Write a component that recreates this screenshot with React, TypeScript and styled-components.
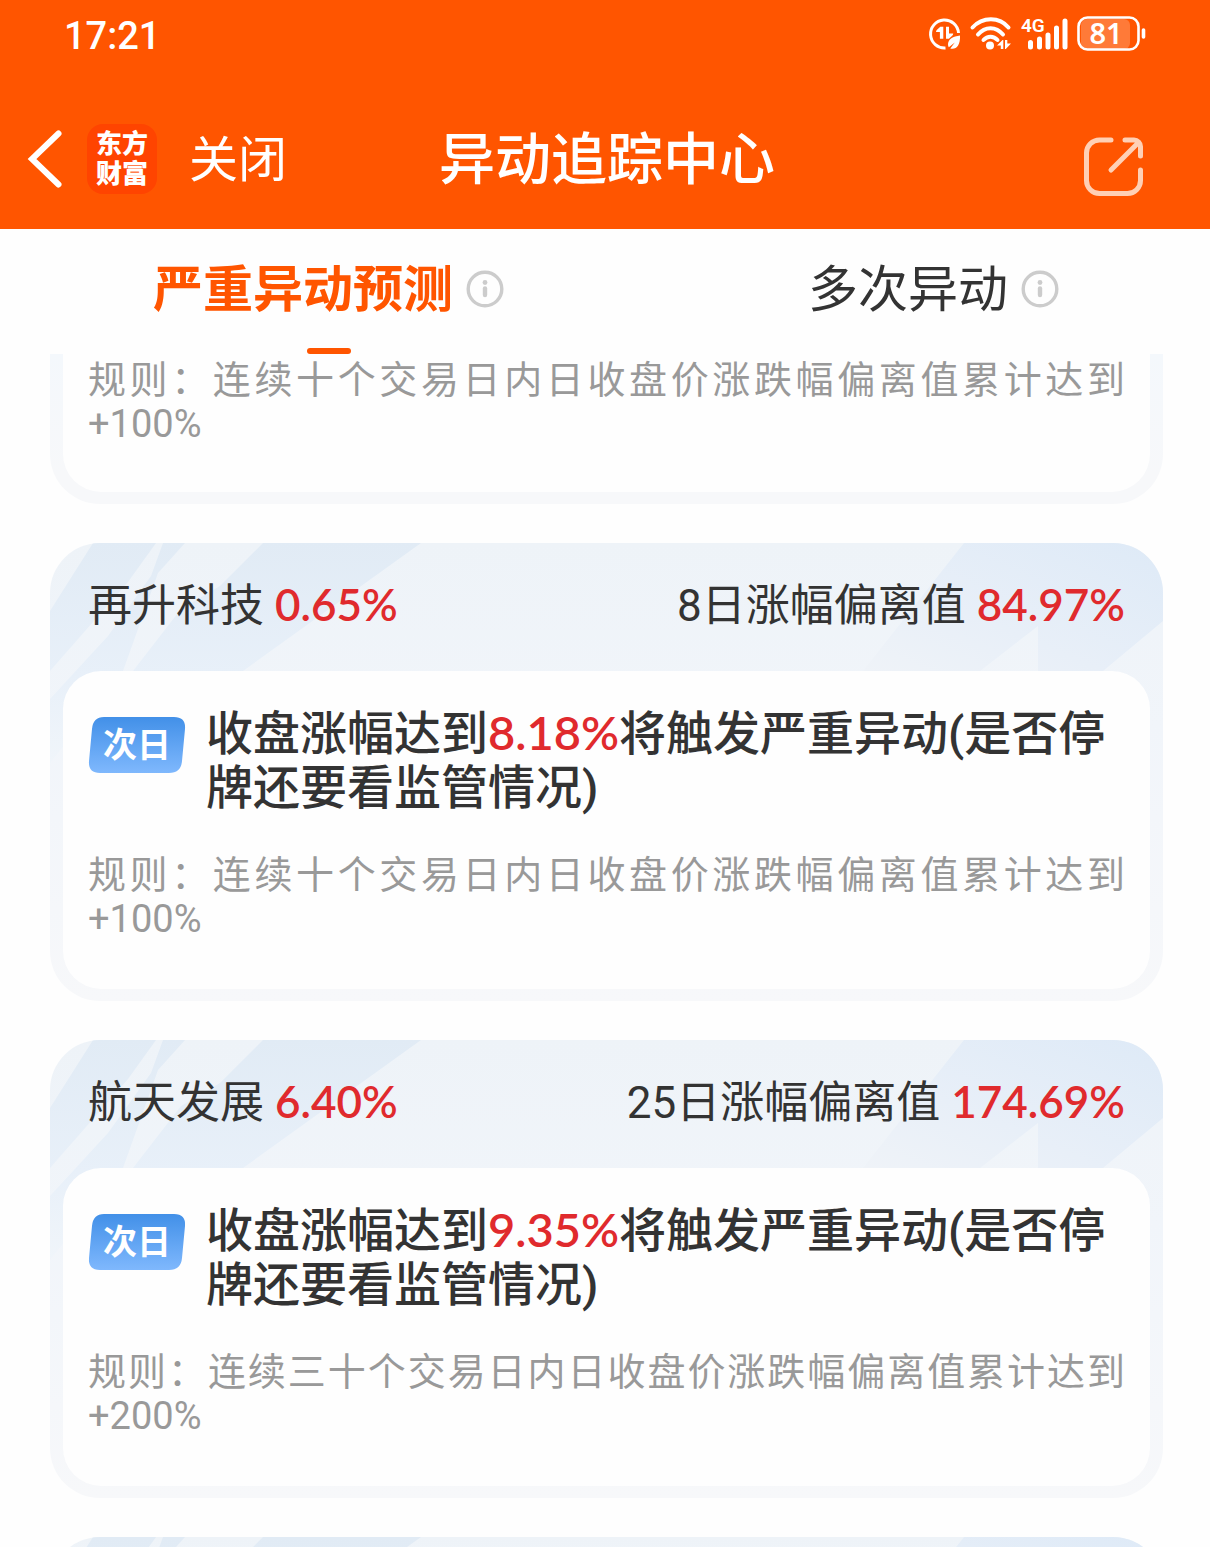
import React from "react";
import styled, { createGlobalStyle } from "styled-components";

const text = `Roboto, "Noto Sans CJK SC", sans-serif`;
const figures = `Lato, "Noto Sans CJK SC", sans-serif`;

const GlobalStyle = createGlobalStyle`
  *, *::before, *::after { box-sizing: border-box; }
  body { margin: 0; background: #fefefe; color: #333; font-family: ${text}; }
  button { border: 0; padding: 0; margin: 0; background: none; color: inherit; font: inherit; cursor: pointer; }
  h1, h2, p { margin: 0; font: inherit; }
  svg { display: block; flex: none; overflow: visible; }
`;

const Shell = styled.div`
  display: flex;
  flex-direction: column;
  height: 100vh;
  overflow: hidden;
`;

const TopBar = styled.header`
  flex: none;
  background: #ff5500;
  color: #fff;
`;

const StatusBar = styled.div`
  display: flex;
  align-items: center;
  justify-content: space-between;
  height: 68px;
  padding: 0 64px;
`;

const Clock = styled.time`
  padding-top: 4px;
  font-size: 38px;
  font-weight: 500;
  line-height: 48px;
`;

const StatusIcons = styled.div`
  display: flex;
  align-items: center;
  gap: 9px;
`;

const NavBar = styled.nav`
  display: grid;
  grid-template-columns: 1fr auto 1fr;
  align-items: center;
  height: 161px;
  padding: 20px 20px 0 24px;
`;

const NavStart = styled.div`
  display: flex;
  align-items: center;
`;

const AppBadge = styled.div`
  display: flex;
  flex-direction: column;
  align-items: center;
  justify-content: center;
  width: 70px;
  height: 70px;
  margin: 0 32px 0 22px;
  border-radius: 16px;
  background: #ff4400;
  font-size: 26px;
  font-weight: 900;
  line-height: 30px;
`;

const CloseButton = styled.button`
  && { padding-top: 4px; font-size: 49px; line-height: 70px; }
`;

const PageTitle = styled.h1`
  && { padding-top: 2px; font-size: 56px; font-weight: 500; line-height: 80px; }
`;

const ShareButton = styled.button`
  && { justify-self: end; margin: 16px 45px 0 0; }
`;

const Tabs = styled.div`
  display: grid;
  grid-template-columns: 1fr 1fr;
  flex: none;
  height: 125px;
`;

const TabItem = styled.div`
  display: flex;
  flex-direction: column;
  align-items: center;
  justify-content: space-between;
  padding: 20px 0 0 52px;
`;

const TabRow = styled.div`
  display: flex;
  align-items: center;
  gap: 13px;
`;

const TabButton = styled.button<{ $active?: boolean }>`
  && {
    padding-top: 2px;
    color: ${(p) => (p.$active ? "#ff5500" : "#333")};
    font-size: 50px;
    font-weight: ${(p) => (p.$active ? 700 : 400)};
    line-height: 78px;
  }
`;

const Underline = styled.span`
  width: 44px;
  height: 6px;
  border-radius: 3px;
  background: #ff5500;
`;

const List = styled.main`
  flex: 1;
  min-height: 0;
  display: flex;
  flex-direction: column;
  gap: 39px;
  padding: 0 47px 0 50px;
  overflow: hidden;
`;

const Card = styled.article<{ $continued?: boolean }>`
  position: relative;
  flex: none;
  padding: 0 13px 12px;
  border-radius: ${(p) => (p.$continued ? "0 0 50px 50px" : "50px")};
  background: ${(p) => (p.$continued ? "linear-gradient(#f4f8fc, #f7f8fa 80%)" : "linear-gradient(#eef3f8, #f1f5fa 40%, #f7f8fa)")};
  overflow: hidden;
`;

const CardHead = styled.header`
  position: relative;
  display: flex;
  justify-content: space-between;
  height: 128px;
  padding: 28px 25px 0;
  font-size: 44px;
  line-height: 66px;
`;

const Figure = styled.span`
  margin-left: 11px;
  color: #e02a2d;
  font-family: ${figures};
  font-weight: 600;
`;

const CardBody = styled.div<{ $continued?: boolean }>`
  position: relative;
  padding: ${(p) => (p.$continued ? "4px 25px 46px" : "36px 25px 48px")};
  border-radius: ${(p) => (p.$continued ? "0 0 38px 38px" : "38px")};
  background: #fefefe;
`;

const Forecast = styled.div`
  display: flex;
  gap: 20px;
  margin-bottom: 38px;
`;

const DayTag = styled.span`
  display: grid;
  place-items: center;
  position: relative;
  flex: none;
  width: 98px;
  height: 56px;
  margin-top: 10px;
  color: #fff;
  font-size: 34px;
  font-weight: 700;
  line-height: 56px;
`;

const TagShape = styled.svg`
  position: absolute;
  inset: 0;
`;

const TagText = styled.span`
  position: relative;
`;

const ForecastText = styled.h2`
  && { font-size: 47px; font-weight: 500; line-height: 54px; }
`;

const Trigger = styled.em`
  color: #e02a2d;
  font-family: ${figures};
  font-style: normal;
  font-weight: 600;
  line-height: 1;
`;

const Rule = styled.p`
  && {
    color: #999;
    font-size: 38px;
    line-height: 44px;
    text-align: justify;
  }
`;

const Rays = styled.svg<{ $side: "left" | "right" }>`
  position: absolute;
  top: 0;
  ${(p) => p.$side}: 0;
`;

const InfoIcon = () => (
  <svg width="38" height="38" viewBox="0 0 38 38" aria-hidden="true">
    <circle cx="19" cy="19" r="16.8" fill="none" stroke="#ccc" strokeWidth="3.4" />
    <circle cx="19" cy="12.5" r="2.4" fill="#ccc" />
    <path d="M19 18.5v6.5" stroke="#ccc" strokeWidth="4.4" strokeLinecap="round" />
  </svg>
);

const DataSaverIcon = () => (
  <svg width="32" height="34" viewBox="0 0 32 34" fill="#fff" aria-hidden="true">
    <path d="M16.5 31A14 14 0 1 1 29.5 16" fill="none" stroke="#fff" strokeWidth="3" />
    <path d="M14.3 9.7v12h-3.4v-6.700H7q0-1.500 1-2.300l3.300-3zM17 9.700h3v6.700h4.200q0 1.500-1 2.300l-3.300 3H17z" />
    <path d="M31 18.5c-7 .8-12 3.8-12 9 0 1 .3 2 .8 2.7l6-4.700-4.500 6c5.700 1.500 10.200-3 9.700-13z" />
  </svg>
);

const WifiIcon = () => (
  <svg width="42" height="34" viewBox="0 0 42 34" fill="none" stroke="#fff" strokeLinecap="round" aria-hidden="true">
    <path d="M2.500 10.500C12.500-.5 29.500-.5 38.500 10.500" strokeWidth="4" />
    <path d="M8 17.500c7-8.500 18-8.500 25 0" strokeWidth="4" />
    <path d="M13.500 23c4-4.500 10-4.500 14 0" strokeWidth="4" />
    <circle cx="20" cy="28.500" r="4" fill="#fff" stroke="none" />
    <path d="M27 28.500l5.500-5.500h.8v9h-2.500v-3.500zM35 23h2.300v3.500H41L35.800 32H35z" fill="#fff" stroke="none" />
  </svg>
);

const SignalIcon = () => (
  <svg width="47" height="34" viewBox="0 0 47 34" aria-hidden="true">
    <g stroke="#fff" strokeWidth="5" strokeLinecap="round">
      <path d="M9.500 25.500v4.500M18.500 22v8M27 18v12M35.500 11v19M44 4v26" />
    </g>
    <text x="0" y="15" fill="#fff" fontFamily="Roboto, sans-serif" fontSize="19" fontWeight="600">4G</text>
  </svg>
);

const BatteryIcon = () => (
  <svg width="69" height="36" viewBox="0 0 69 36" aria-hidden="true">
    <rect x="4" y="3" width="49" height="30" rx="6" fill="#ff7a38" />
    <rect x="1.500" y="1.500" width="60" height="32" rx="9" fill="none" stroke="#fff" strokeWidth="2.600" />
    <path d="M66.500 14v7" stroke="#fff" strokeWidth="3.600" strokeLinecap="round" />
    <text x="29" y="28" textAnchor="middle" fill="#fff" fontFamily="Noto Sans, sans-serif" fontSize="29" fontWeight="600">81</text>
  </svg>
);

const BackIcon = () => (
  <svg width="41" height="60" viewBox="0 0 41 60" fill="none" aria-hidden="true">
    <path d="M34.500 4.500L8 30l26.500 25.500" stroke="#fff" strokeWidth="6" strokeLinecap="round" strokeLinejoin="miter" />
  </svg>
);

const ShareIcon = () => (
  <svg width="62" height="60" viewBox="0 0 62 60" fill="none" stroke="#ffd0b5" strokeWidth="5" strokeLinecap="round" strokeLinejoin="round" aria-hidden="true">
    <path d="M28 3H16.500A13 13 0 0 0 3.500 16V43.500A13 13 0 0 0 16.500 56.500H44.500A13 13 0 0 0 57.500 43.500V33" />
    <path d="M42 3h9a6.500 6.500 0 0 1 6.500 6.500V19M54 7L28 33" />
  </svg>
);

const CardRays = () => (
  <>
    <Rays $side="left" width="380" height="220" viewBox="0 0 380 220" aria-hidden="true">
      <defs>
        <linearGradient id="rayLeft" gradientUnits="userSpaceOnUse" x1="0" y1="0" x2="0" y2="220">
          <stop offset="0" stopColor="#e1ebf5" />
          <stop offset=".6" stopColor="#e8f0f9" />
          <stop offset="1" stopColor="#f0f5fa" />
        </linearGradient>
      </defs>
      <g fill="url(#rayLeft)">
        <path d="M43 0H106L78 39L0 128V68z" />
        <path d="M113 0H135L108 30L73 128L0 220V156L58 93L101 33z" />
        <path d="M213 0H371L193 128L60 220H20L83 128L131 66L170 43z" />
      </g>
    </Rays>
    <Rays $side="right" width="300" height="180" viewBox="0 0 300 180" aria-hidden="true">
      <defs>
        <linearGradient id="rayRight" x1="1" y1="0" x2="0" y2="1">
          <stop offset="0" stopColor="#deeaf7" />
          <stop offset=".6" stopColor="#e8eff8" />
          <stop offset="1" stopColor="#eff3f8" />
        </linearGradient>
      </defs>
      <path fill="url(#rayRight)" d="M101 0H300V78L240 128H175V83L117 128H0z" />
    </Rays>
  </>
);

type Stock = {
  name: string;
  change: string;
  label: string;
  deviation: string;
  trigger: string;
  rule: string;
};

const stocks: Stock[] = [
  { name: "再升科技", change: "0.65%", label: "8日涨幅偏离值", deviation: "84.97%", trigger: "8.18%", rule: "规则：连续十个交易日内日收盘价涨跌幅偏离值累计达到+100%" },
  { name: "航天发展", change: "6.40%", label: "25日涨幅偏离值", deviation: "174.69%", trigger: "9.35%", rule: "规则：连续三十个交易日内日收盘价涨跌幅偏离值累计达到+200%" },
];

const StockCard = ({ stock }: { stock: Stock }) => (
  <Card>
    <CardRays />
    <CardHead>
      <span>{stock.name}<Figure>{stock.change}</Figure></span>
      <span>{stock.label}<Figure>{stock.deviation}</Figure></span>
    </CardHead>
    <CardBody>
      <Forecast>
        <DayTag>
          <TagShape width="98" height="56" viewBox="0 0 98 56" aria-hidden="true">
            <defs>
              <linearGradient id="tagFill" x1="0" y1="0" x2="0" y2="1">
                <stop offset="0" stopColor="#4290e8" />
                <stop offset="1" stopColor="#7fb8fd" />
              </linearGradient>
            </defs>
            <path fill="url(#tagFill)" d="M16 0H86Q98 0 97 12L94 44Q93 56 81 56H12Q0 56 1 44L4 12Q5 0 16 0z" />
          </TagShape>
          <TagText>次日</TagText>
        </DayTag>
        <ForecastText>收盘涨幅达到<Trigger>{stock.trigger}</Trigger>将触发严重异动(是否停牌还要看监管情况)</ForecastText>
      </Forecast>
      <Rule>{stock.rule}</Rule>
    </CardBody>
  </Card>
);

export default function App() {
  return (
    <Shell>
      <GlobalStyle />
      <TopBar>
        <StatusBar>
          <Clock>17:21</Clock>
          <StatusIcons>
            <DataSaverIcon />
            <WifiIcon />
            <SignalIcon />
            <BatteryIcon />
          </StatusIcons>
        </StatusBar>
        <NavBar>
          <NavStart>
            <button aria-label="返回"><BackIcon /></button>
            <AppBadge><span>东方</span><span>财富</span></AppBadge>
            <CloseButton>关闭</CloseButton>
          </NavStart>
          <PageTitle>异动追踪中心</PageTitle>
          <ShareButton aria-label="分享"><ShareIcon /></ShareButton>
        </NavBar>
      </TopBar>
      <Tabs>
        <TabItem>
          <TabRow>
            <TabButton $active>严重异动预测</TabButton>
            <button aria-label="说明"><InfoIcon /></button>
          </TabRow>
          <Underline />
        </TabItem>
        <TabItem>
          <TabRow>
            <TabButton>多次异动</TabButton>
            <button aria-label="说明"><InfoIcon /></button>
          </TabRow>
        </TabItem>
      </Tabs>
      <List>
        <Card $continued>
          <CardBody $continued>
            <Rule>{stocks[0].rule}</Rule>
          </CardBody>
        </Card>
        {stocks.map((s) => <StockCard key={s.name} stock={s} />)}
        <Card aria-hidden="true">
          <CardRays />
          <CardHead />
        </Card>
      </List>
    </Shell>
  );
}
